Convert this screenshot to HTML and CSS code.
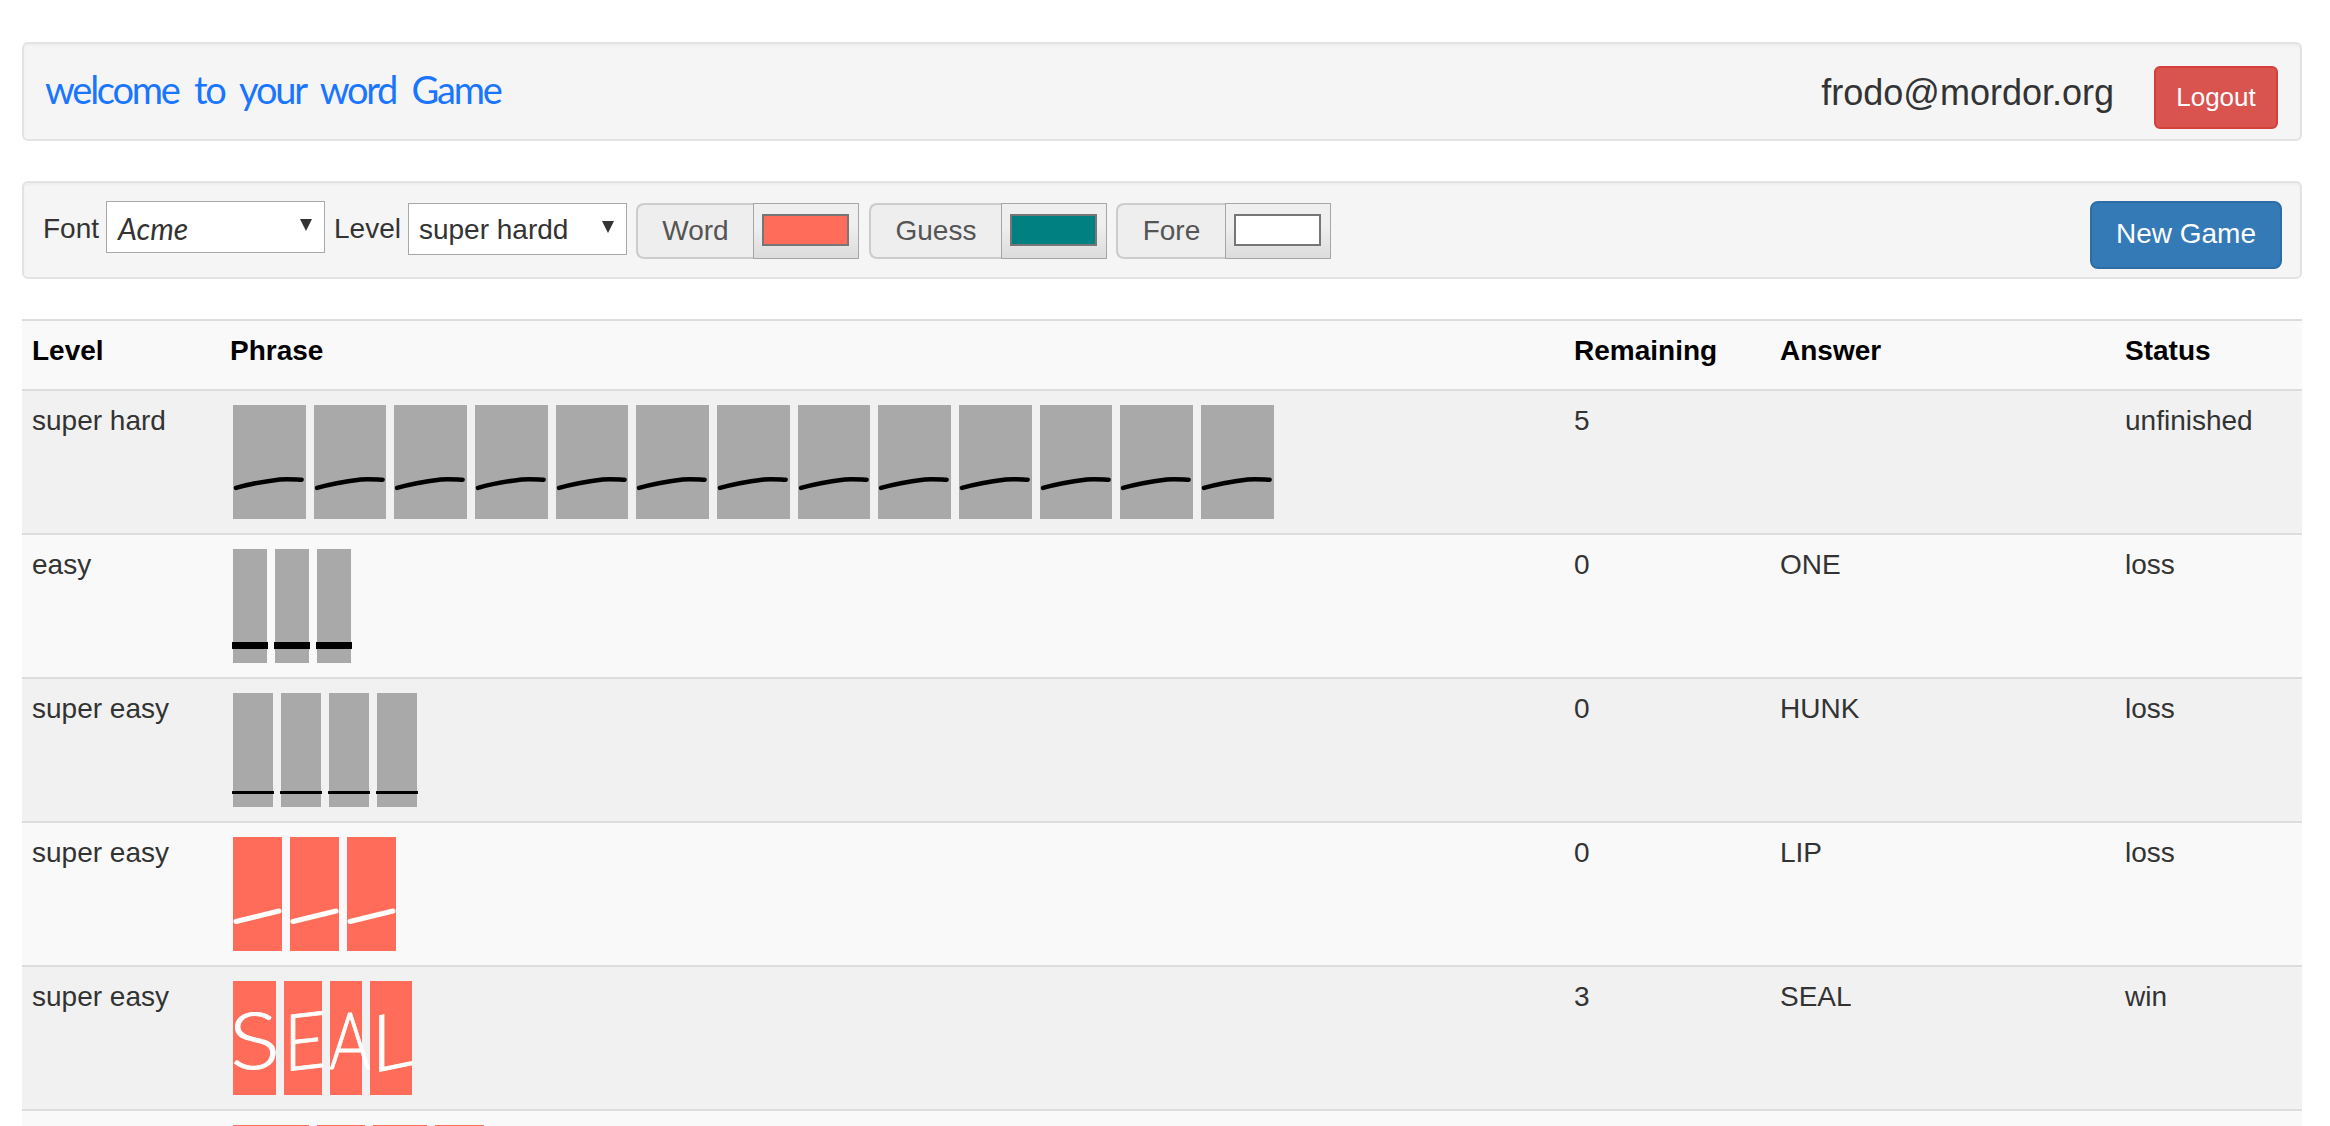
FILE: index.html
```html
<!DOCTYPE html>
<html>
<head>
    <title>Word Game</title>
    <link rel="stylesheet" href="styles.css">
</head>
<body>
    <div class="well top-bar">
        <h1 class="welcome">welcome to your word Game</h1>
        <div class="user-info">
            <span class="email">frodo@mordor.org</span>
            <button class="btn btn-logout">Logout</button>
        </div>
    </div>

    <div class="well controls">
        <span class="ctl-label">Font</span>
        <div class="pick pick-font"><span class="acme">Acme</span><i class="arrow"></i></div>
        <span class="ctl-label">Level</span>
        <div class="pick pick-level"><span>super hardd</span><i class="arrow"></i></div>
        <div class="color-group group-word">
            <span class="addon addon-word">Word</span>
            <span class="swatch-box"><span class="swatch swatch-word"></span></span>
        </div>
        <div class="color-group">
            <span class="addon addon-guess">Guess</span>
            <span class="swatch-box"><span class="swatch swatch-guess"></span></span>
        </div>
        <div class="color-group">
            <span class="addon addon-fore">Fore</span>
            <span class="swatch-box"><span class="swatch swatch-fore"></span></span>
        </div>
        <button class="btn btn-new">New Game</button>
    </div>

    <table class="games">
        <colgroup>
            <col class="col-level"><col class="col-phrase"><col class="col-remaining"><col class="col-answer"><col class="col-status">
        </colgroup>
        <thead>
            <tr><th>Level</th><th>Phrase</th><th>Remaining</th><th>Answer</th><th>Status</th></tr>
        </thead>
        <tbody>
            <tr>
                <td>super hard</td>
                <td><div class="tiles">
                    <div class="tile grey w-hard"><svg class="dash" viewBox="0 0 73 114"><path d="M3 83C20 78 35 76 47 74.500C55 73.800 62 74.500 69 74.800"/></svg></div>
                    <div class="tile grey w-hard"><svg class="dash" viewBox="0 0 73 114"><path d="M3 83C20 78 35 76 47 74.500C55 73.800 62 74.500 69 74.800"/></svg></div>
                    <div class="tile grey w-hard"><svg class="dash" viewBox="0 0 73 114"><path d="M3 83C20 78 35 76 47 74.500C55 73.800 62 74.500 69 74.800"/></svg></div>
                    <div class="tile grey w-hard"><svg class="dash" viewBox="0 0 73 114"><path d="M3 83C20 78 35 76 47 74.500C55 73.800 62 74.500 69 74.800"/></svg></div>
                    <div class="tile grey w-hard"><svg class="dash" viewBox="0 0 73 114"><path d="M3 83C20 78 35 76 47 74.500C55 73.800 62 74.500 69 74.800"/></svg></div>
                    <div class="tile grey w-hard"><svg class="dash" viewBox="0 0 73 114"><path d="M3 83C20 78 35 76 47 74.500C55 73.800 62 74.500 69 74.800"/></svg></div>
                    <div class="tile grey w-hard"><svg class="dash" viewBox="0 0 73 114"><path d="M3 83C20 78 35 76 47 74.500C55 73.800 62 74.500 69 74.800"/></svg></div>
                    <div class="tile grey w-hard"><svg class="dash" viewBox="0 0 73 114"><path d="M3 83C20 78 35 76 47 74.500C55 73.800 62 74.500 69 74.800"/></svg></div>
                    <div class="tile grey w-hard"><svg class="dash" viewBox="0 0 73 114"><path d="M3 83C20 78 35 76 47 74.500C55 73.800 62 74.500 69 74.800"/></svg></div>
                    <div class="tile grey w-hard"><svg class="dash" viewBox="0 0 73 114"><path d="M3 83C20 78 35 76 47 74.500C55 73.800 62 74.500 69 74.800"/></svg></div>
                    <div class="tile grey w-hard"><svg class="dash" viewBox="0 0 73 114"><path d="M3 83C20 78 35 76 47 74.500C55 73.800 62 74.500 69 74.800"/></svg></div>
                    <div class="tile grey w-hard"><svg class="dash" viewBox="0 0 73 114"><path d="M3 83C20 78 35 76 47 74.500C55 73.800 62 74.500 69 74.800"/></svg></div>
                    <div class="tile grey w-hard"><svg class="dash" viewBox="0 0 73 114"><path d="M3 83C20 78 35 76 47 74.500C55 73.800 62 74.500 69 74.800"/></svg></div>
                </div></td>
                <td>5</td>
                <td></td>
                <td>unfinished</td>
            </tr>
            <tr>
                <td>easy</td>
                <td><div class="tiles">
                    <div class="tile grey w-easy"><i class="bar bar-thick"></i></div>
                    <div class="tile grey w-easy"><i class="bar bar-thick"></i></div>
                    <div class="tile grey w-easy"><i class="bar bar-thick"></i></div>
                </div></td>
                <td>0</td>
                <td>ONE</td>
                <td>loss</td>
            </tr>
            <tr>
                <td>super easy</td>
                <td><div class="tiles">
                    <div class="tile grey w-hunk"><i class="bar bar-thin"></i></div>
                    <div class="tile grey w-hunk"><i class="bar bar-thin"></i></div>
                    <div class="tile grey w-hunk"><i class="bar bar-thin"></i></div>
                    <div class="tile grey w-hunk"><i class="bar bar-thin"></i></div>
                </div></td>
                <td>0</td>
                <td>HUNK</td>
                <td>loss</td>
            </tr>
            <tr>
                <td>super easy</td>
                <td><div class="tiles">
                    <div class="tile salmon w-lip"><svg class="dash dash-white" viewBox="0 0 49 114"><path d="M3 84.500L46 74"/></svg></div>
                    <div class="tile salmon w-lip"><svg class="dash dash-white" viewBox="0 0 49 114"><path d="M3 84.500L46 74"/></svg></div>
                    <div class="tile salmon w-lip"><svg class="dash dash-white" viewBox="0 0 49 114"><path d="M3 84.500L46 74"/></svg></div>
                </div></td>
                <td>0</td>
                <td>LIP</td>
                <td>loss</td>
            </tr>
            <tr>
                <td>super easy</td>
                <td><div class="tiles">
                    <div class="tile salmon w-s"><span class="letter letter-s">S</span></div>
                    <div class="tile salmon w-e"><span class="letter letter-e">E</span></div>
                    <div class="tile salmon w-a"><span class="letter letter-a">A</span></div>
                    <div class="tile salmon w-l"><span class="letter letter-l">L</span></div>
                </div></td>
                <td>3</td>
                <td>SEAL</td>
                <td>win</td>
            </tr>
            <tr>
                <td></td>
                <td><div class="tiles">
                    <div class="tile salmon w-r1"></div>
                    <div class="tile salmon w-r2"></div>
                    <div class="tile salmon w-r3"></div>
                    <div class="tile salmon w-r4"></div>
                </div></td>
                <td></td>
                <td></td>
                <td></td>
            </tr>
        </tbody>
    </table>
</body>
</html>
```

FILE: styles.css
```css
html, body { margin: 0; height: 1126px; overflow: hidden; background: #fff; }
body { font-family: "Liberation Sans", Arial, sans-serif; font-size: 28px; color: #333; padding: 42px 28px 0 22px; box-sizing: border-box; width: 2330px; }

.well { background: #f5f5f5; border: 2px solid #e3e3e3; border-radius: 6px; box-shadow: inset 0 2px 2px rgba(0,0,0,.03); box-sizing: border-box; height: 99px; display: flex; }

.top-bar { align-items: flex-start; justify-content: space-between; padding: 0 22px 0 21px; }
.welcome { margin: 15px 0 0; font-family: Lato, sans-serif; font-size: 38px; font-weight: 400; line-height: 60px; color: #1a75ff; letter-spacing: -2.25px; word-spacing: 8px; }
.user-info { display: flex; align-items: flex-start; }
.email { font-size: 36px; line-height: 50px; margin-top: 24px; margin-right: 40px; }

.btn { font-family: inherit; color: #fff; box-sizing: border-box; border-style: solid; border-width: 2px; }
.btn-logout { width: 124px; height: 63px; margin-top: 22px; font-size: 26px; background: #d9534f; border-color: #d43f3a; border-radius: 6px; padding: 0; }
.btn-new { width: 192px; height: 68px; margin-left: auto; margin-right: 18px; font-size: 28px; background: #337ab7; border-color: #2e6da4; border-radius: 8px; padding: 0 0 2px; }

.controls { height: 98px; margin-top: 40px; align-items: flex-start; padding-top: 18px; padding-left: 19px; }
.ctl-label { line-height: 55px; margin-right: 7px; }
.pick { width: 219px; height: 52px; box-sizing: border-box; background: #fff; border: 1.5px solid #a9a9a9; display: flex; align-items: center; padding: 2px 12px 0 10px; margin-right: 9px; flex: none; }
.pick span { flex: 1; }
.pick-level { margin-top: 2px; }
.acme { font-family: Lato, sans-serif; font-style: italic; font-size: 30px; padding-left: 1px; }
.arrow { width: 0; height: 0; border-left: 6px solid transparent; border-right: 6px solid transparent; border-top: 12px solid #333; margin-top: -6px; }

.color-group { display: flex; height: 56px; margin-top: 2px; margin-right: 9px; flex: none; }
.group-word { margin-right: 10px; }
.addon { background: #eee; border: 2px solid #ccc; border-right: 0; border-radius: 8px 0 0 8px; color: #555; box-sizing: border-box; display: flex; align-items: center; justify-content: center; }
.addon-word { width: 117px; }
.addon-guess { width: 132px; }
.addon-fore { width: 109px; }
.swatch-box { width: 106px; box-sizing: border-box; border: 1.5px solid #a6a6a6; background: linear-gradient(#efefef 40%, #dcdcdc); display: flex; align-items: center; justify-content: center; padding-bottom: 3px; }
.swatch { width: 87px; height: 32px; box-sizing: border-box; border: 2px solid #767676; }
.swatch-word { background: #ff6d5a; }
.swatch-guess { background: #008080; }
.swatch-fore { background: #fff; }

.games { margin-top: 40px; width: 2280px; table-layout: fixed; border-collapse: collapse; }
.col-level { width: 198px; }
.col-phrase { width: 1344px; }
.col-remaining { width: 206px; }
.col-answer { width: 345px; }
.col-status { width: 187px; }
.games th, .games td { text-align: left; vertical-align: top; padding: 0 10px; line-height: 32px; }
.games th { color: #000; font-weight: bold; height: 70px; padding-top: 14px; padding-bottom: 14px; box-sizing: border-box; background: #f9f9f9; border-top: 2px solid #ddd; border-bottom: 2px solid #ddd; }
.games td { border-top: 2px solid #ddd; padding-top: 14px; padding-bottom: 14px; }
.games tbody tr:nth-child(odd) { background: #f1f1f1; }
.games tbody tr:nth-child(even) { background: #f9f9f9; }

.tiles { display: flex; gap: 8px; margin-left: 3px; }
.tile { height: 114px; flex: none; position: relative; display: flex; align-items: center; justify-content: center; }
.grey { background: #a9a9a9; }
.salmon { background: #ff6d5a; }
.w-hard { width: 72.67px; }
.w-easy { width: 34px; }
.w-hunk { width: 40px; }
.w-lip { width: 49px; }
.w-s { width: 43px; }
.w-e { width: 38px; }
.w-a { width: 32px; }
.w-l { width: 42px; }
.w-r1 { width: 76px; }
.w-r2 { width: 48px; }
.w-r3 { width: 54px; }
.w-r4 { width: 49px; }

.dash { position: absolute; left: 0; top: 0; width: 100%; height: 114px; overflow: visible; }
.dash path { fill: none; stroke: #000; stroke-width: 4.5; stroke-linecap: round; }
.dash-white path { stroke: #fff; stroke-width: 5; }
.bar { position: absolute; background: #000; }
.bar-thick { left: -1px; right: -1px; top: 93px; height: 7px; }
.bar-thin { left: -1px; right: -1px; top: 97.5px; height: 3.5px; }

.letter { font-family: Lato, sans-serif; font-size: 79px; font-weight: 300; line-height: 1; color: #fff; -webkit-text-stroke: .8px #fff; white-space: nowrap; display: block; }
.letter-s { transform: scaleX(1.2) rotate(-3deg); }
.letter-e { transform: translateX(2px) scaleX(.93) skewY(-6deg); }
.letter-a { transform: translateX(4px) scaleX(.8); }
.letter-l { transform: translateX(1px) scaleX(1.05) skewY(-12deg); }
```
